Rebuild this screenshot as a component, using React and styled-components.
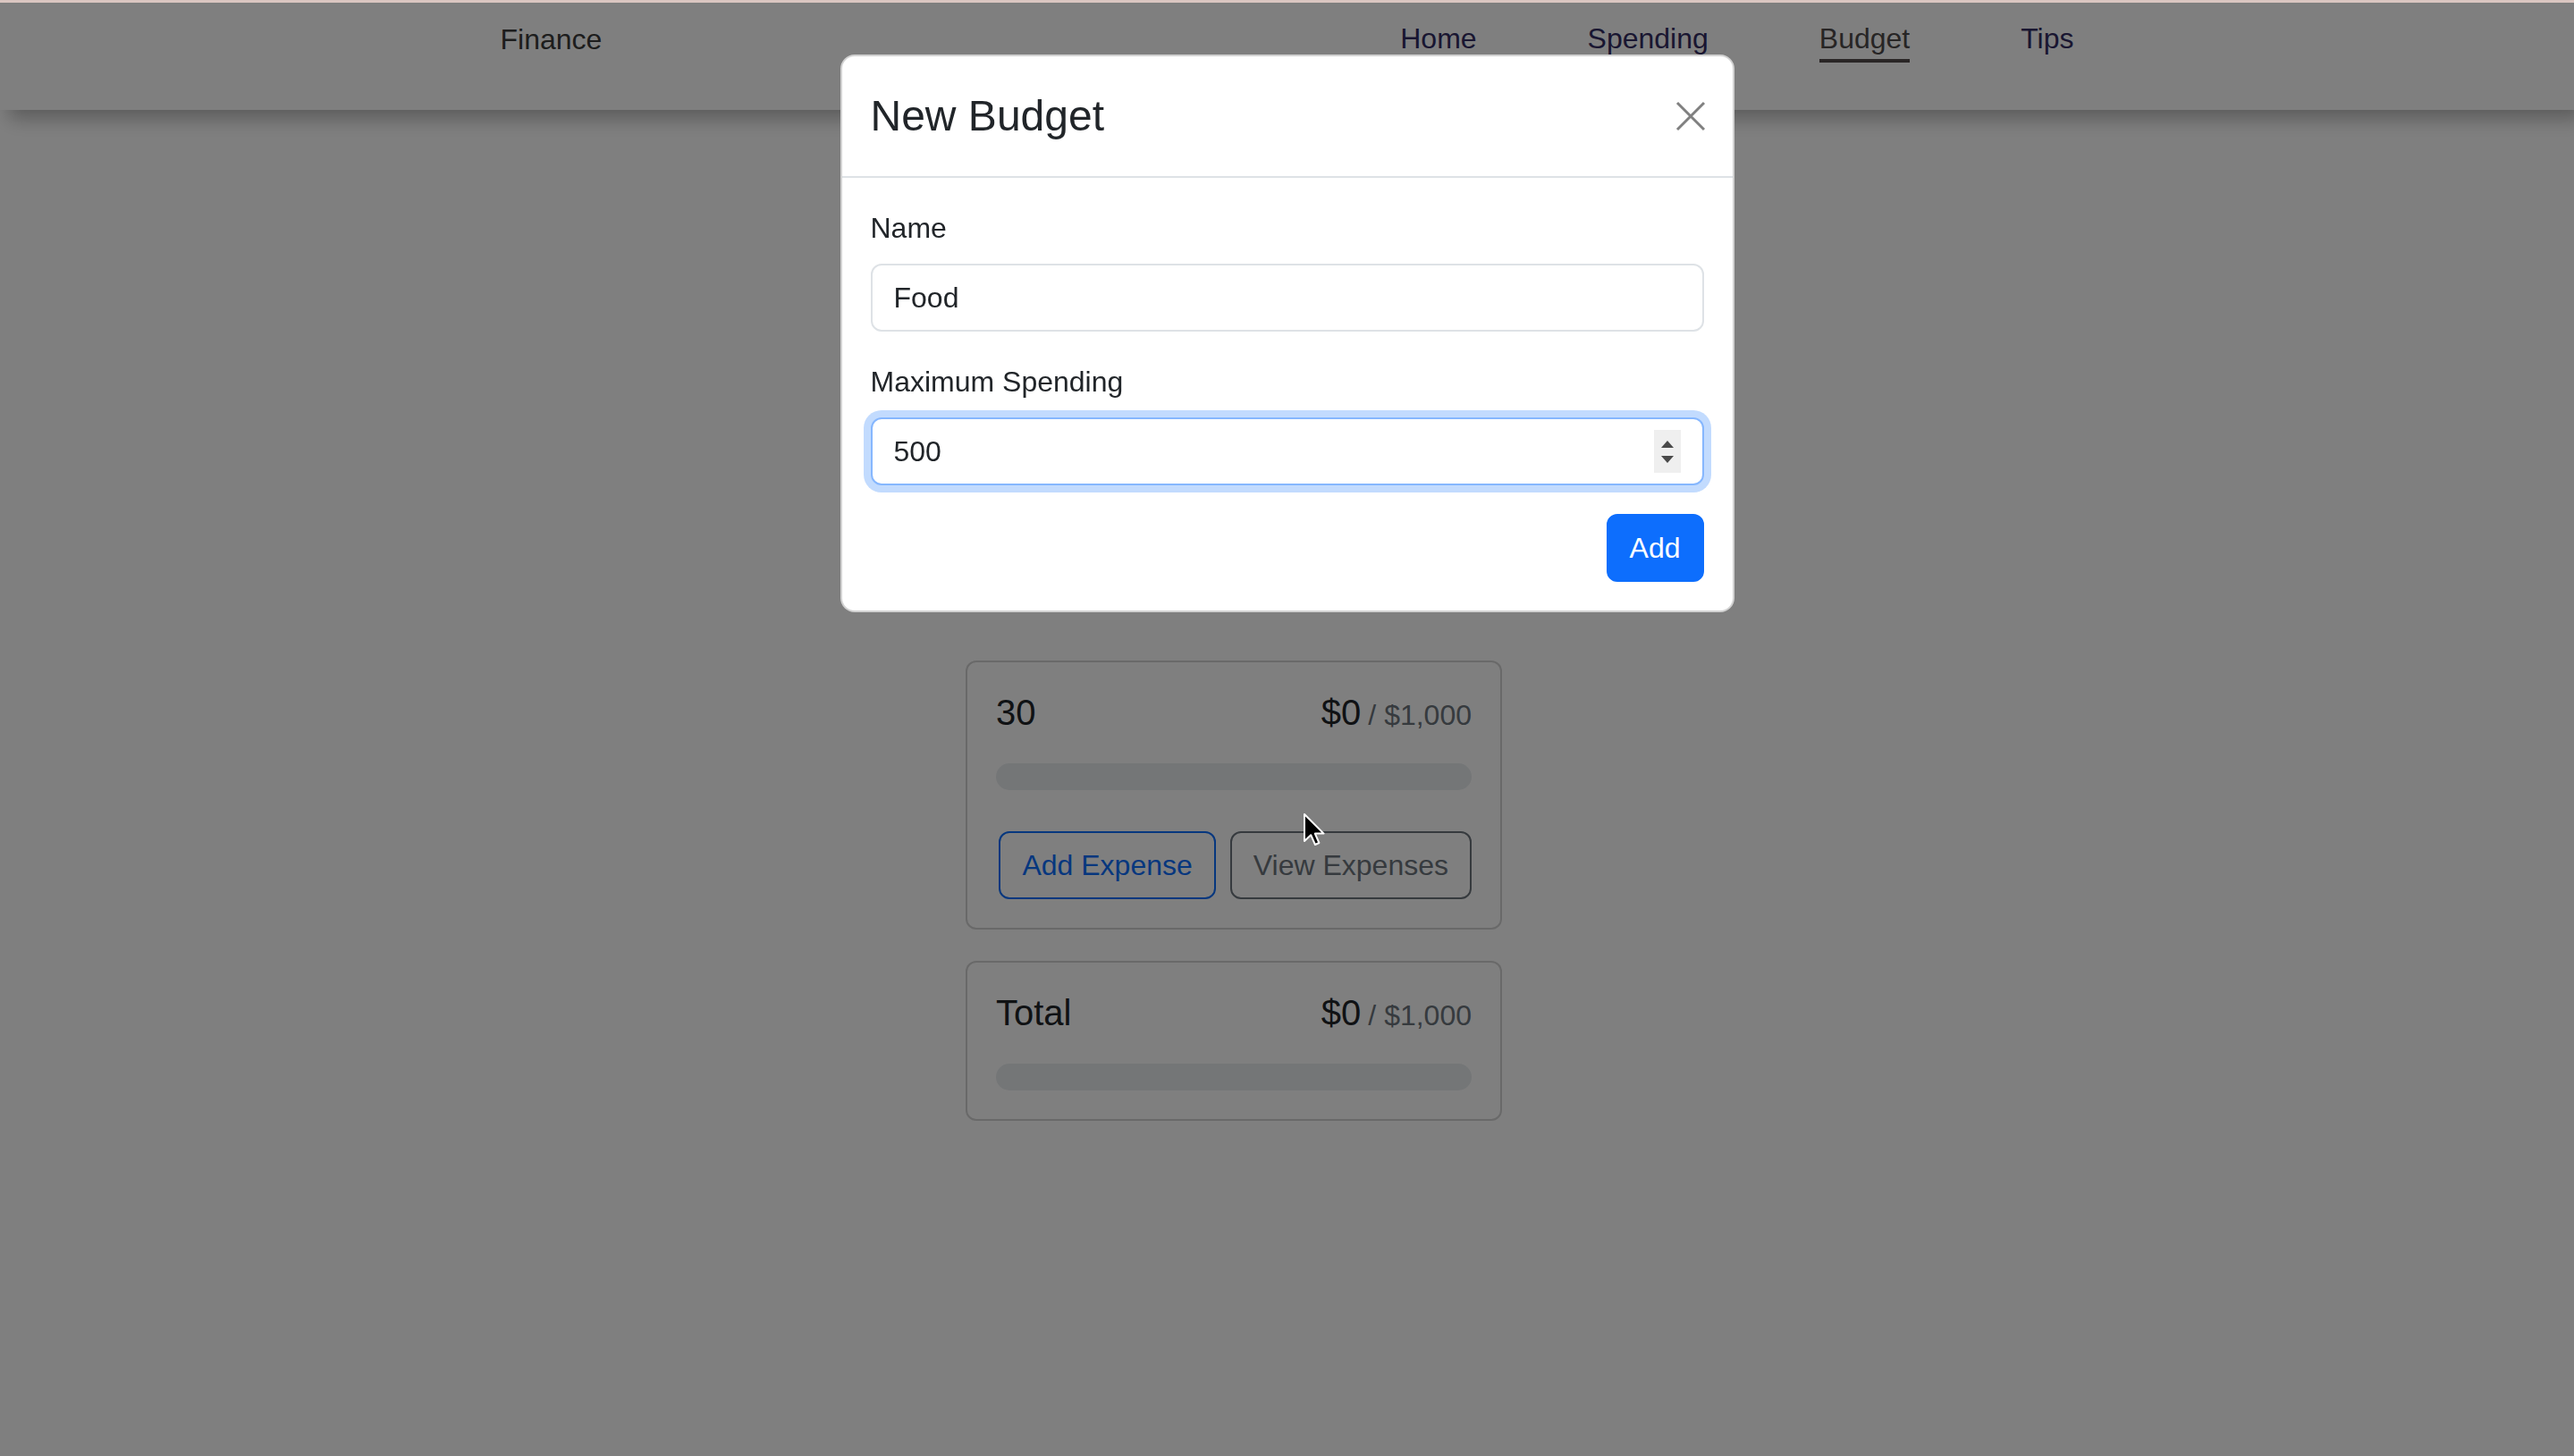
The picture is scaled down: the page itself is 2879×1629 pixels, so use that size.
import React from 'react'
import styled, { createGlobalStyle, css } from 'styled-components'

const GlobalStyle = createGlobalStyle`
  html, body {
    margin: 0;
    padding: 0;
    background: #fff;
  }
  body {
    font-family: 'Liberation Sans', Arial, sans-serif;
    color: #212529;
    min-height: 100vh;
  }
  * {
    box-sizing: border-box;
  }
`

const Page = styled.div`
  min-height: 100vh;
  background: #fff;
`

const Navbar = styled.nav`
  height: 123px;
  background: #fff;
  box-shadow: 10px 10px 20px rgba(0, 0, 0, 0.28);
  position: relative;
  z-index: 1;
`

const NavInner = styled.div`
  width: 1760px;
  margin: 0 auto;
  padding-top: 20px;
  display: flex;
  justify-content: space-between;
  align-items: flex-start;
`

const Brand = styled.span`
  font-size: 32px;
  line-height: 48px;
  color: #3a3a3a;
`

const NavLinks = styled.div`
  display: flex;
  gap: 124px;
`

const NavLink = styled.a`
  font-size: 32px;
  line-height: 46px;
  color: #332c62;
  text-decoration: none;
  border-bottom: 4px solid transparent;

  ${(p) =>
    p.$active &&
    css`
      color: #4e4a4a;
      border-bottom-color: #544c4c;
    `}
`

const Main = styled.main`
  display: flex;
  justify-content: center;
  padding: 616px 119px 0 0;
`

const CardList = styled.div`
  width: 600px;
  display: flex;
  flex-direction: column;
  gap: 35px;
`

const Card = styled.div`
  border: 2px solid rgba(0, 0, 0, 0.175);
  border-radius: 12px;
  padding: 32px;
  background: #fff;
`

const CardTitle = styled.div`
  display: flex;
  justify-content: space-between;
  align-items: baseline;
  margin-bottom: 30px;
  font-size: 40px;
  line-height: 48px;
`

const Amount = styled.div`
  display: flex;
  align-items: baseline;
`

const Max = styled.span`
  font-size: 32px;
  color: #6c757d;
  margin-left: 8px;
`

const Progress = styled.div`
  height: 30px;
  border-radius: 999px;
  background: #e9ecef;
  overflow: hidden;
`

const ProgressFill = styled.div`
  height: 100%;
  background: #0d6efd;
`

const CardActions = styled.div`
  margin-top: 46px;
  display: flex;
  justify-content: flex-end;
  gap: 16px;
`

const OutlineButton = styled.button`
  font-family: inherit;
  font-size: 32px;
  line-height: 48px;
  padding: 12px 24px;
  border-radius: 12px;
  background: transparent;
  border: 2px solid ${(p) => p.$color};
  color: ${(p) => p.$color};
  cursor: pointer;
`

const Backdrop = styled.div`
  position: fixed;
  inset: 0;
  background: rgba(0, 0, 0, 0.5);
  border-top: 3px solid #dac6c1;
  z-index: 10;
`

const ModalWrap = styled.div`
  position: fixed;
  inset: 0;
  z-index: 20;
  display: flex;
  justify-content: center;
  align-items: flex-start;
  padding-top: 61px;
`

const ModalContent = styled.div`
  width: 1000px;
  background: #fff;
  border: 2px solid rgba(0, 0, 0, 0.175);
  border-radius: 16px;
`

const ModalHeader = styled.div`
  display: flex;
  align-items: center;
  justify-content: space-between;
  padding: 31px 32px;
  border-bottom: 2px solid #dee2e6;
`

const ModalTitle = styled.h5`
  margin: 0;
  font-size: 48px;
  line-height: 72px;
  font-weight: 400;
  color: #212529;
`

const CloseButton = styled.button`
  width: 48px;
  height: 48px;
  margin-right: -9px;
  padding: 0;
  border: 0;
  background: transparent;
  display: flex;
  align-items: center;
  justify-content: center;
  cursor: pointer;
`

const ModalBody = styled.form`
  padding: 32px;
  display: flex;
  flex-direction: column;
`

const FormGroup = styled.div`
  margin-bottom: 32px;
`

const Label = styled.label`
  display: block;
  font-size: 32px;
  line-height: 48px;
  margin-bottom: 16px;
  color: #212529;
`

const Field = styled.div`
  display: flex;
  align-items: center;
  padding: 12px 24px;
  border-radius: 12px;
  border: 2px solid ${(p) => (p.$focused ? '#86b7fe' : '#dee2e6')};
  box-shadow: ${(p) => (p.$focused ? '0 0 0 8px rgba(13, 110, 253, 0.25)' : 'none')};
  background: #fff;
`

const FieldInput = styled.input`
  flex: 1;
  min-width: 0;
  border: 0;
  outline: none;
  padding: 0;
  font-family: inherit;
  font-size: 32px;
  line-height: 48px;
  height: 48px;
  color: #212529;
  background: transparent;
  appearance: textfield;

  &::-webkit-inner-spin-button,
  &::-webkit-outer-spin-button {
    -webkit-appearance: none;
    margin: 0;
  }
`

const Spinner = styled.div`
  width: 30px;
  height: 48px;
  background: #efefef;
  display: flex;
  flex-direction: column;
  align-items: center;
  justify-content: center;
  gap: 9px;
`

const Actions = styled.div`
  display: flex;
  justify-content: flex-end;
`

const PrimaryButton = styled.button`
  font-family: inherit;
  font-size: 32px;
  line-height: 48px;
  padding: 12px 24px;
  border-radius: 12px;
  border: 2px solid #0d6efd;
  background: #0d6efd;
  color: #fff;
  cursor: pointer;
`

const Cursor = styled.svg`
  position: fixed;
  left: 1457px;
  top: 909px;
  z-index: 30;
  pointer-events: none;
`

const budgets = [
  { name: '30', amount: '$0', max: '$1,000', actions: true },
  { name: 'Total', amount: '$0', max: '$1,000', actions: false }
]

const BudgetCard = ({ name, amount, max, actions }) => (
  <Card>
    <CardTitle>
      <span>{name}</span>
      <Amount>
        {amount}
        <Max>/ {max}</Max>
      </Amount>
    </CardTitle>
    <Progress>
      <ProgressFill style={{ width: '0%' }} />
    </Progress>
    {actions && (
      <CardActions>
        <OutlineButton $color='#0d6efd'>Add Expense</OutlineButton>
        <OutlineButton $color='#6c757d'>View Expenses</OutlineButton>
      </CardActions>
    )}
  </Card>
)

const App = () => {
  return (
    <Page>
      <GlobalStyle />
      <Navbar>
        <NavInner>
          <Brand>Finance</Brand>
          <NavLinks>
            <NavLink href='#'>Home</NavLink>
            <NavLink href='#'>Spending</NavLink>
            <NavLink href='#' $active>Budget</NavLink>
            <NavLink href='#'>Tips</NavLink>
          </NavLinks>
        </NavInner>
      </Navbar>

      <Main>
        <CardList>
          {budgets.map((b) => (
            <BudgetCard key={b.name} {...b} />
          ))}
        </CardList>
      </Main>

      <Backdrop />
      <ModalWrap>
        <ModalContent>
          <ModalHeader>
            <ModalTitle>New Budget</ModalTitle>
            <CloseButton type='button' aria-label='Close'>
              <svg width='34' height='34' viewBox='0 0 34 34'>
                <path d='M2 2L32 32M32 2L2 32' stroke='#808080' strokeWidth='3' />
              </svg>
            </CloseButton>
          </ModalHeader>
          <ModalBody onSubmit={(e) => e.preventDefault()}>
            <FormGroup>
              <Label>Name</Label>
              <Field>
                <FieldInput type='text' defaultValue='Food' />
              </Field>
            </FormGroup>
            <FormGroup>
              <Label>Maximum Spending</Label>
              <Field $focused>
                <FieldInput type='number' defaultValue='500' />
                <Spinner>
                  <svg width='14' height='8' viewBox='0 0 14 8'>
                    <path d='M7 0L14 8H0Z' fill='#4a4a4a' />
                  </svg>
                  <svg width='14' height='8' viewBox='0 0 14 8'>
                    <path d='M0 0H14L7 8Z' fill='#4a4a4a' />
                  </svg>
                </Spinner>
              </Field>
            </FormGroup>
            <Actions>
              <PrimaryButton type='submit'>Add</PrimaryButton>
            </Actions>
          </ModalBody>
        </ModalContent>
      </ModalWrap>

      <Cursor width='26' height='38' viewBox='0 0 13 19'>
        <path
          d='M1 1V16L4.6 12.6L7 18L9.2 17L6.9 11.8H11.8Z'
          fill='#000'
          stroke='#fff'
          strokeWidth='1'
          strokeLinejoin='round'
        />
      </Cursor>
    </Page>
  )
}

export default App
